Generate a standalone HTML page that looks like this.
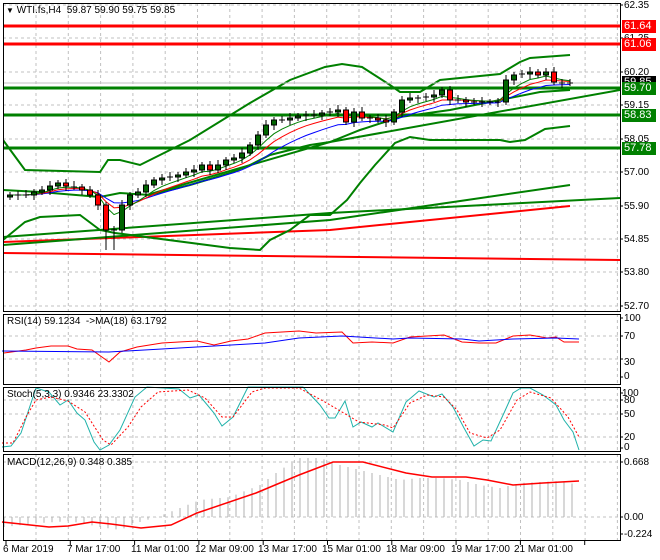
<!DOCTYPE html>
<html><head><meta charset="utf-8">
<style>
html,body{margin:0;padding:0;background:#fff;}
#c{position:relative;width:660px;height:560px;overflow:hidden;font-family:"Liberation Sans",sans-serif;font-size:10px;color:#000;}
.t{position:absolute;white-space:nowrap;line-height:11px;}
.bx{position:absolute;left:622px;width:34px;height:13px;color:#fff;font-size:11px;line-height:13px;padding-left:2px;box-sizing:border-box;}
</style></head><body>
<div id="c">
<svg id="s" width="660" height="560" style="position:absolute;left:0;top:0"></svg>
<div class="t" style="left:6px;top:5px;"><span style="font-size:8px">&#9660;</span> WTI.fs,H4&nbsp; 59.87 59.90 59.75 59.85</div>
<div class="t" style="left:7px;top:316px;">RSI(14) 59.1234&nbsp; -&gt;MA(18) 63.1792</div>
<div class="t" style="left:7px;top:389px;">Stoch(5,3,3) 0.9346 23.3302</div>
<div class="t" style="left:7px;top:457px;">MACD(12,26,9) 0.348 0.385</div>
<div class="t" style="left:624px;top:0px;">62.35</div>
<div class="t" style="left:624px;top:33px;">61.25</div>
<div class="t" style="left:624px;top:67px;">60.20</div>
<div class="t" style="left:624px;top:100px;">59.15</div>
<div class="t" style="left:624px;top:134px;">58.05</div>
<div class="t" style="left:624px;top:167px;">57.00</div>
<div class="t" style="left:624px;top:201px;">55.90</div>
<div class="t" style="left:624px;top:234px;">54.85</div>
<div class="t" style="left:624px;top:267px;">53.80</div>
<div class="t" style="left:624px;top:301px;">52.70</div>
<div class="bx" style="top:20px;background:#f00">61.64</div>
<div class="bx" style="top:38px;background:#f00">61.06</div>
<div class="bx" style="top:76px;background:#000">59.85</div>
<div class="bx" style="top:82px;background:#008000">59.70</div>
<div class="bx" style="top:109px;background:#008000">58.83</div>
<div class="bx" style="top:142px;background:#008000">57.78</div>
<div class="t" style="left:624px;top:313px;">100</div>
<div class="t" style="left:624px;top:331px;">70</div>
<div class="t" style="left:624px;top:357px;">30</div>
<div class="t" style="left:624px;top:371px;">0</div>
<div class="t" style="left:622px;top:388px;">100</div>
<div class="t" style="left:624px;top:395px;">80</div>
<div class="t" style="left:624px;top:409px;">50</div>
<div class="t" style="left:624px;top:432px;">20</div>
<div class="t" style="left:624px;top:442px;">0</div>
<div class="t" style="left:624px;top:457px;">0.668</div>
<div class="t" style="left:624px;top:512px;">0.00</div>
<div class="t" style="left:624px;top:529px;">-0.224</div>
<div class="t" style="left:3px;top:544px;">6 Mar 2019</div>
<div class="t" style="left:67px;top:544px;">7 Mar 17:00</div>
<div class="t" style="left:131px;top:544px;">11 Mar 01:00</div>
<div class="t" style="left:195px;top:544px;">12 Mar 09:00</div>
<div class="t" style="left:258px;top:544px;">13 Mar 17:00</div>
<div class="t" style="left:322px;top:544px;">15 Mar 01:00</div>
<div class="t" style="left:386px;top:544px;">18 Mar 09:00</div>
<div class="t" style="left:451px;top:544px;">19 Mar 17:00</div>
<div class="t" style="left:514px;top:544px;">21 Mar 01:00</div>
</div>
<script>
var o='';
function L(x1,y1,x2,y2,c,w,d){o+='<line x1="'+x1+'" y1="'+y1+'" x2="'+x2+'" y2="'+y2+'" stroke="'+c+'" stroke-width="'+(w||1)+'"'+(d?' stroke-dasharray="'+d+'"':'')+'/>';}
function P(pts,c,w,d){o+='<polyline fill="none" points="'+pts.map(function(p){return p.join(',')}).join(' ')+'" stroke="'+c+'" stroke-width="'+(w||1)+'"'+(d?' stroke-dasharray="'+d+'"':'')+'/>';}
var R=620;
// grids
var panels=[[3,311],[314,384],[387,451],[454,540]];
for(var x=36;x<R;x+=32.3){panels.forEach(function(p){L(x.toFixed(1),p[0],x.toFixed(1),p[1],'#c0c0c0',1,'3,3');});}
[5,38,72,105,139,172,206,239,272,306].forEach(function(y){L(3,y,R,y,'#c0c0c0',1,'3,3');});
[336,359].forEach(function(y){L(3,y,R,y,'#c0c0c0',1,'3,3');});
[400,414,437].forEach(function(y){L(3,y,R,y,'#c0c0c0',1,'3,3');});
[462,517].forEach(function(y){L(3,y,R,y,'#c0c0c0',1,'3,3');});
// clip main
o+='<clipPath id="cm"><rect x="3" y="3" width="617" height="308"/></clipPath><g clip-path="url(#cm)">';
// trendlines
P([[3,253],[620,260]],'#f00',2);
P([[3,242],[330,230],[570,206]],'#f00',2);
P([[3,237],[330,213],[620,198]],'#008000',2);
P([[3,245],[330,220],[570,185]],'#008000',2);
P([[147,195],[330,142],[620,90]],'#008000',2);
// bollinger
P([[3,140],[25,170],[100,172],[108,160],[120,160],[140,165],[190,140],[250,103],[290,80],[325,67],[342,64],[362,67],[390,85],[400,92],[420,92],[440,80],[500,74],[520,62],[530,58],[570,55]],'#008000',2);
P([[3,240],[25,222],[40,217],[80,215],[100,230],[115,233],[230,248],[260,250],[270,240],[290,230],[310,215],[330,215],[347,200],[360,183],[375,165],[395,143],[410,137],[430,140],[500,140],[510,142],[525,140],[545,129],[570,126]],'#008000',2);
P([[3,190],[40,192],[100,197],[120,193],[150,195],[190,185],[230,173],[250,165],[270,155],[290,150],[310,145],[330,142],[360,130],[400,117],[450,110],[500,100],[540,92],[570,90]],'#008000',2);
// horizontals
L(3,26,R,26,'#f00',3);L(3,44,R,44,'#f00',3);
L(3,83,R,83,'#c0c0c0',1);
L(3,88,R,88,'#008000',3);L(3,115,R,115,'#008000',3);L(3,148,R,148,'#008000',3);
// candles
var cl=[195,195,195,192,190,186,183,186,187,190,195,205,230,230,205,195,192,185,180,178,177,175,172,170,165,170,165,160,158,153,145,135,125,120,120,118,116,115,115,113,112,110,122,112,118,118,120,122,112,100,98,98,97,95,90,100,100,102,102,102,102,102,80,75,74,72,75,72,82,83,83];
function ema(n){var k=2/(n+1),e=cl[0],r=[];cl.forEach(function(v){e=e+k*(v-e);r.push(e);});return r;}
var m1=ema(5),m2=ema(8),m3=ema(13);
function xs(a){return a.map(function(v,i){return [10+i*8,v.toFixed(1)];});}
P(xs(m3),'#00f',1);P(xs(m2),'#f00',1);P(xs(m1),'#008000',1);
var prev=197;
cl.forEach(function(c,i){var x=10+i*8;var op=prev;var hi=Math.min(op,c)-3-(i%3),lo=Math.max(op,c)+3+(i%2)*2;
if(i==12)lo=250;if(i==13)lo=250;
L(x,hi,x,lo,'#000',1);
var top=Math.min(op,c),h=Math.max(1,Math.abs(op-c));
var col=c<op?'#006400':'#f00';if(Math.abs(op-c)<1.5){L(x-3,c,x+3,c,'#000',1);}else
o+='<rect x="'+(x-2.5)+'" y="'+top+'" width="5" height="'+h+'" fill="'+col+'" stroke="#000" stroke-width="1"/>';
prev=c;});
o+='</g>';
// RSI
P([[4,353],[26,350],[36,348],[51,346],[68,346],[77,349],[92,350],[109,362],[120,352],[137,347],[162,343],[179,342],[197,341],[214,345],[231,341],[248,339],[265,333],[299,331],[316,333],[342,332],[353,343],[372,342],[393,343],[410,337],[444,335],[462,342],[479,343],[496,343],[513,336],[530,335],[547,338],[556,337],[564,342],[579,342]],'#f00',1);
P([[2,351],[109,352],[214,346],[265,343],[299,338],[342,336],[393,339],[410,338],[462,339],[479,341],[513,339],[556,338],[579,339]],'#00f',1);
// Stoch
P([[2,447],[11,446],[21,433],[36,388],[49,392],[60,405],[68,400],[77,413],[85,420],[94,442],[100,450],[109,445],[120,430],[135,397],[147,387],[179,389],[190,398],[199,395],[214,413],[222,426],[233,417],[248,387],[303,387],[320,405],[329,418],[335,418],[345,401],[353,427],[361,422],[372,427],[378,423],[393,432],[406,402],[419,391],[434,397],[442,394],[453,407],[464,428],[474,446],[483,440],[491,441],[504,413],[513,393],[521,388],[530,388],[543,395],[556,405],[564,420],[573,432],[579,450]],'#20b2aa',1);
P([[2,443],[13,443],[26,417],[36,400],[51,397],[68,401],[85,412],[103,440],[111,445],[128,427],[141,407],[158,392],[188,390],[205,398],[222,417],[233,417],[252,392],[265,388],[299,388],[325,402],[342,412],[359,422],[385,425],[393,428],[410,403],[427,395],[444,397],[457,410],[470,433],[487,438],[500,430],[517,400],[530,392],[551,398],[568,417],[579,437]],'#f00',1,'2,2');
// MACD histogram
var hp=[[4,527],[40,523],[70,521],[100,527],[120,530],[140,522],[160,516],[175,510],[200,500],[230,497],[260,485],[280,470],[300,458],[320,458],[340,465],[360,470],[380,475],[400,480],[420,478],[440,478],[460,480],[480,485],[500,488],[520,483],[540,482],[560,481],[579,485]];
function itp(x){for(var i=1;i<hp.length;i++){if(x<=hp[i][0]){var a=hp[i-1],b=hp[i];return a[1]+(b[1]-a[1])*(x-a[0])/(b[0]-a[0]);}}return hp[hp.length-1][1];}
for(var x=4;x<=579;x+=8){L(x,517,x,itp(x).toFixed(1),'#b0b0b0',1);}
P([[2,522],[49,527],[68,526],[92,522],[111,524],[141,528],[171,525],[197,513],[256,493],[299,475],[333,462],[363,462],[406,473],[432,477],[466,477],[487,480],[513,485],[543,483],[579,481]],'#f00',1.5);
// borders
panels.forEach(function(p){o+='<rect x="3.5" y="'+(p[0]+.5)+'" width="'+(R-3)+'" height="'+(p[1]-p[0])+'" fill="none" stroke="#000" stroke-width="1"/>';});
[5,38,72,105,139,172,206,239,272,306,318,336,359,377,393,400,414,437,448,462,517,534].forEach(function(y){L(R,y,R+3,y,'#000',1);});
for(var x=6;x<R;x+=64.3){L(x.toFixed(1),541,x.toFixed(1),545,'#000',1);}
document.getElementById('s').innerHTML=o;
</script>
</body></html>
